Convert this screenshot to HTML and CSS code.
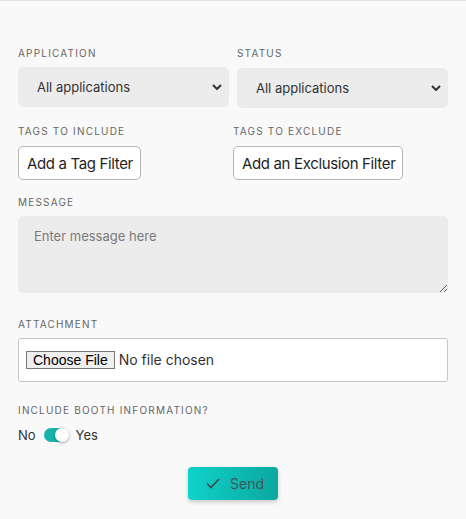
FILE: index.html
```html
<!DOCTYPE html>
<html>
<head>
<meta charset="utf-8">
<link rel="stylesheet" href="styles.css">
</head>
<body>
<form class="form">
  <div class="row two">
    <div class="field">
      <label class="label">Application</label>
      <div class="select-wrap">
        <select class="select"><option>All applications</option></select>
        <svg class="chev" width="10" height="6" viewBox="0 0 10 6"><path d="M1 1l4 4 4-4" fill="none" stroke="#333" stroke-width="2"/></svg>
      </div>
    </div>
    <div class="field">
      <label class="label">Status</label>
      <div class="select-wrap shift">
        <select class="select"><option>All applications</option></select>
        <svg class="chev" width="10" height="6" viewBox="0 0 10 6"><path d="M1 1l4 4 4-4" fill="none" stroke="#333" stroke-width="2"/></svg>
      </div>
    </div>
  </div>

  <div class="row tags">
    <div class="field">
      <label class="label">Tags to include</label>
      <div><button type="button" class="tag-btn">Add a Tag Filter</button></div>
    </div>
    <div class="field">
      <label class="label">Tags to exclude</label>
      <div><button type="button" class="tag-btn">Add an Exclusion Filter</button></div>
    </div>
  </div>

  <div class="field msg">
    <label class="label">Message</label>
    <textarea class="textarea" placeholder="Enter message here"></textarea>
  </div>

  <div class="field att">
    <label class="label">Attachment</label>
    <div class="filebox"><input type="file" class="file"></div>
  </div>

  <div class="field booth">
    <label class="label">Include booth information?</label>
    <div class="toggle-row">
      <span>No</span>
      <span class="toggle"><span class="knob"></span></span>
      <span>Yes</span>
    </div>
  </div>

  <div class="actions">
    <button type="button" class="send">
      <svg width="14" height="11" viewBox="0 0 14 11"><path d="M1 5.5l4 4L13 1" fill="none" stroke="#3d4a4a" stroke-width="1.6"/></svg>
      <span>Send</span>
    </button>
  </div>
</form>
</body>
</html>
```
FILE: styles.css
```css
* { box-sizing: border-box; }
html, body { margin: 0; padding: 0; }
body {
  background: #f9f9f9;
  border-top: 1px solid #e3e3e3;
  font-family: Inter, "Noto Sans", sans-serif;
  color: #333;
  height: 519px;
}
.form {
  padding: 46px 18px 0 18px;
}
.row { display: grid; }
.two { grid-template-columns: 211px 211px; column-gap: 8px; }
.tags { grid-template-columns: 215px 1fr; margin-top: 17px; }
.tags .label { margin-bottom: 9px; }
.field { display: flex; flex-direction: column; }
.label {
  font-size: 10px;
  line-height: 12px;
  letter-spacing: 1.2px;
  text-transform: uppercase;
  color: #666;
  margin-bottom: 8px;
}
.select-wrap { position: relative; }
.select-wrap.shift { margin-top: 1px; }
.select {
  appearance: none;
  -webkit-appearance: none;
  width: 100%;
  height: 40px;
  border: none;
  border-radius: 5px;
  background: #ececec;
  font-family: inherit;
  font-size: 13px;
  color: #333;
  padding: 0 19px;
  outline: none;
}
.chev { position: absolute; right: 7px; top: 17px; }
.tag-btn {
  height: 34px;
  border: 1px solid #b5b5b5;
  border-radius: 5px;
  background: #fff;
  font-family: inherit;
  font-size: 15px;
  color: #1f1f1f;
  padding: 0 7px 0 8px;
  letter-spacing: -0.35px;
}
.msg { margin-top: 16px; }
.textarea {
  display: block;
  width: 430px;
  height: 77px;
  border: none;
  border-radius: 5px;
  background: #ececec;
  font-family: inherit;
  font-size: 13px;
  color: #333;
  padding: 12px 16px;
  resize: vertical;
  outline: none;
}
.textarea::placeholder { color: #7a7a7a; }
.att { margin-top: 25px; }
.filebox {
  height: 44px;
  background: #fff;
  border: 1px solid #c4c4c4;
  border-radius: 3px;
  padding: 0 7px;
  display: flex;
  align-items: center;
}
.file {
  font-family: inherit;
  font-size: 14px;
  color: #333;
}
.file::file-selector-button {
  font-family: "Liberation Sans", Arial, sans-serif;
  font-size: 14px;
  color: #000;
  background: #efefef;
  border: 1px solid #767676;
  border-radius: 0;
  padding: 0 6px;
  height: 18px;
  margin-right: 4px;
}
.booth { margin-top: 22px; }
.booth .label { margin-bottom: 9px; }
.toggle-row {
  display: flex;
  align-items: center;
  gap: 8px;
  font-size: 13px;
  line-height: 20px;
  color: #333;
}
.toggle {
  position: relative;
  width: 24px;
  height: 14px;
  border-radius: 7px;
  background: #17b3ab;
}
.knob {
  position: absolute;
  right: -1px;
  top: 0;
  width: 14px;
  height: 14px;
  border-radius: 50%;
  background: #fff;
  box-shadow: 0 1px 3px rgba(0,0,0,0.35);
}
.actions {
  display: flex;
  justify-content: center;
  margin-top: 22px;
}
.send {
  width: 90px;
  height: 33px;
  border: none;
  border-radius: 4px;
  background: linear-gradient(90deg, #0fd2c9, #0ca79f);
  box-shadow: 0 2px 4px rgba(0,0,0,0.2);
  display: flex;
  align-items: center;
  justify-content: center;
  gap: 10px;
  font-family: inherit;
  font-size: 14px;
  color: #445555;
  padding: 0 0 0 4px;
}
```
